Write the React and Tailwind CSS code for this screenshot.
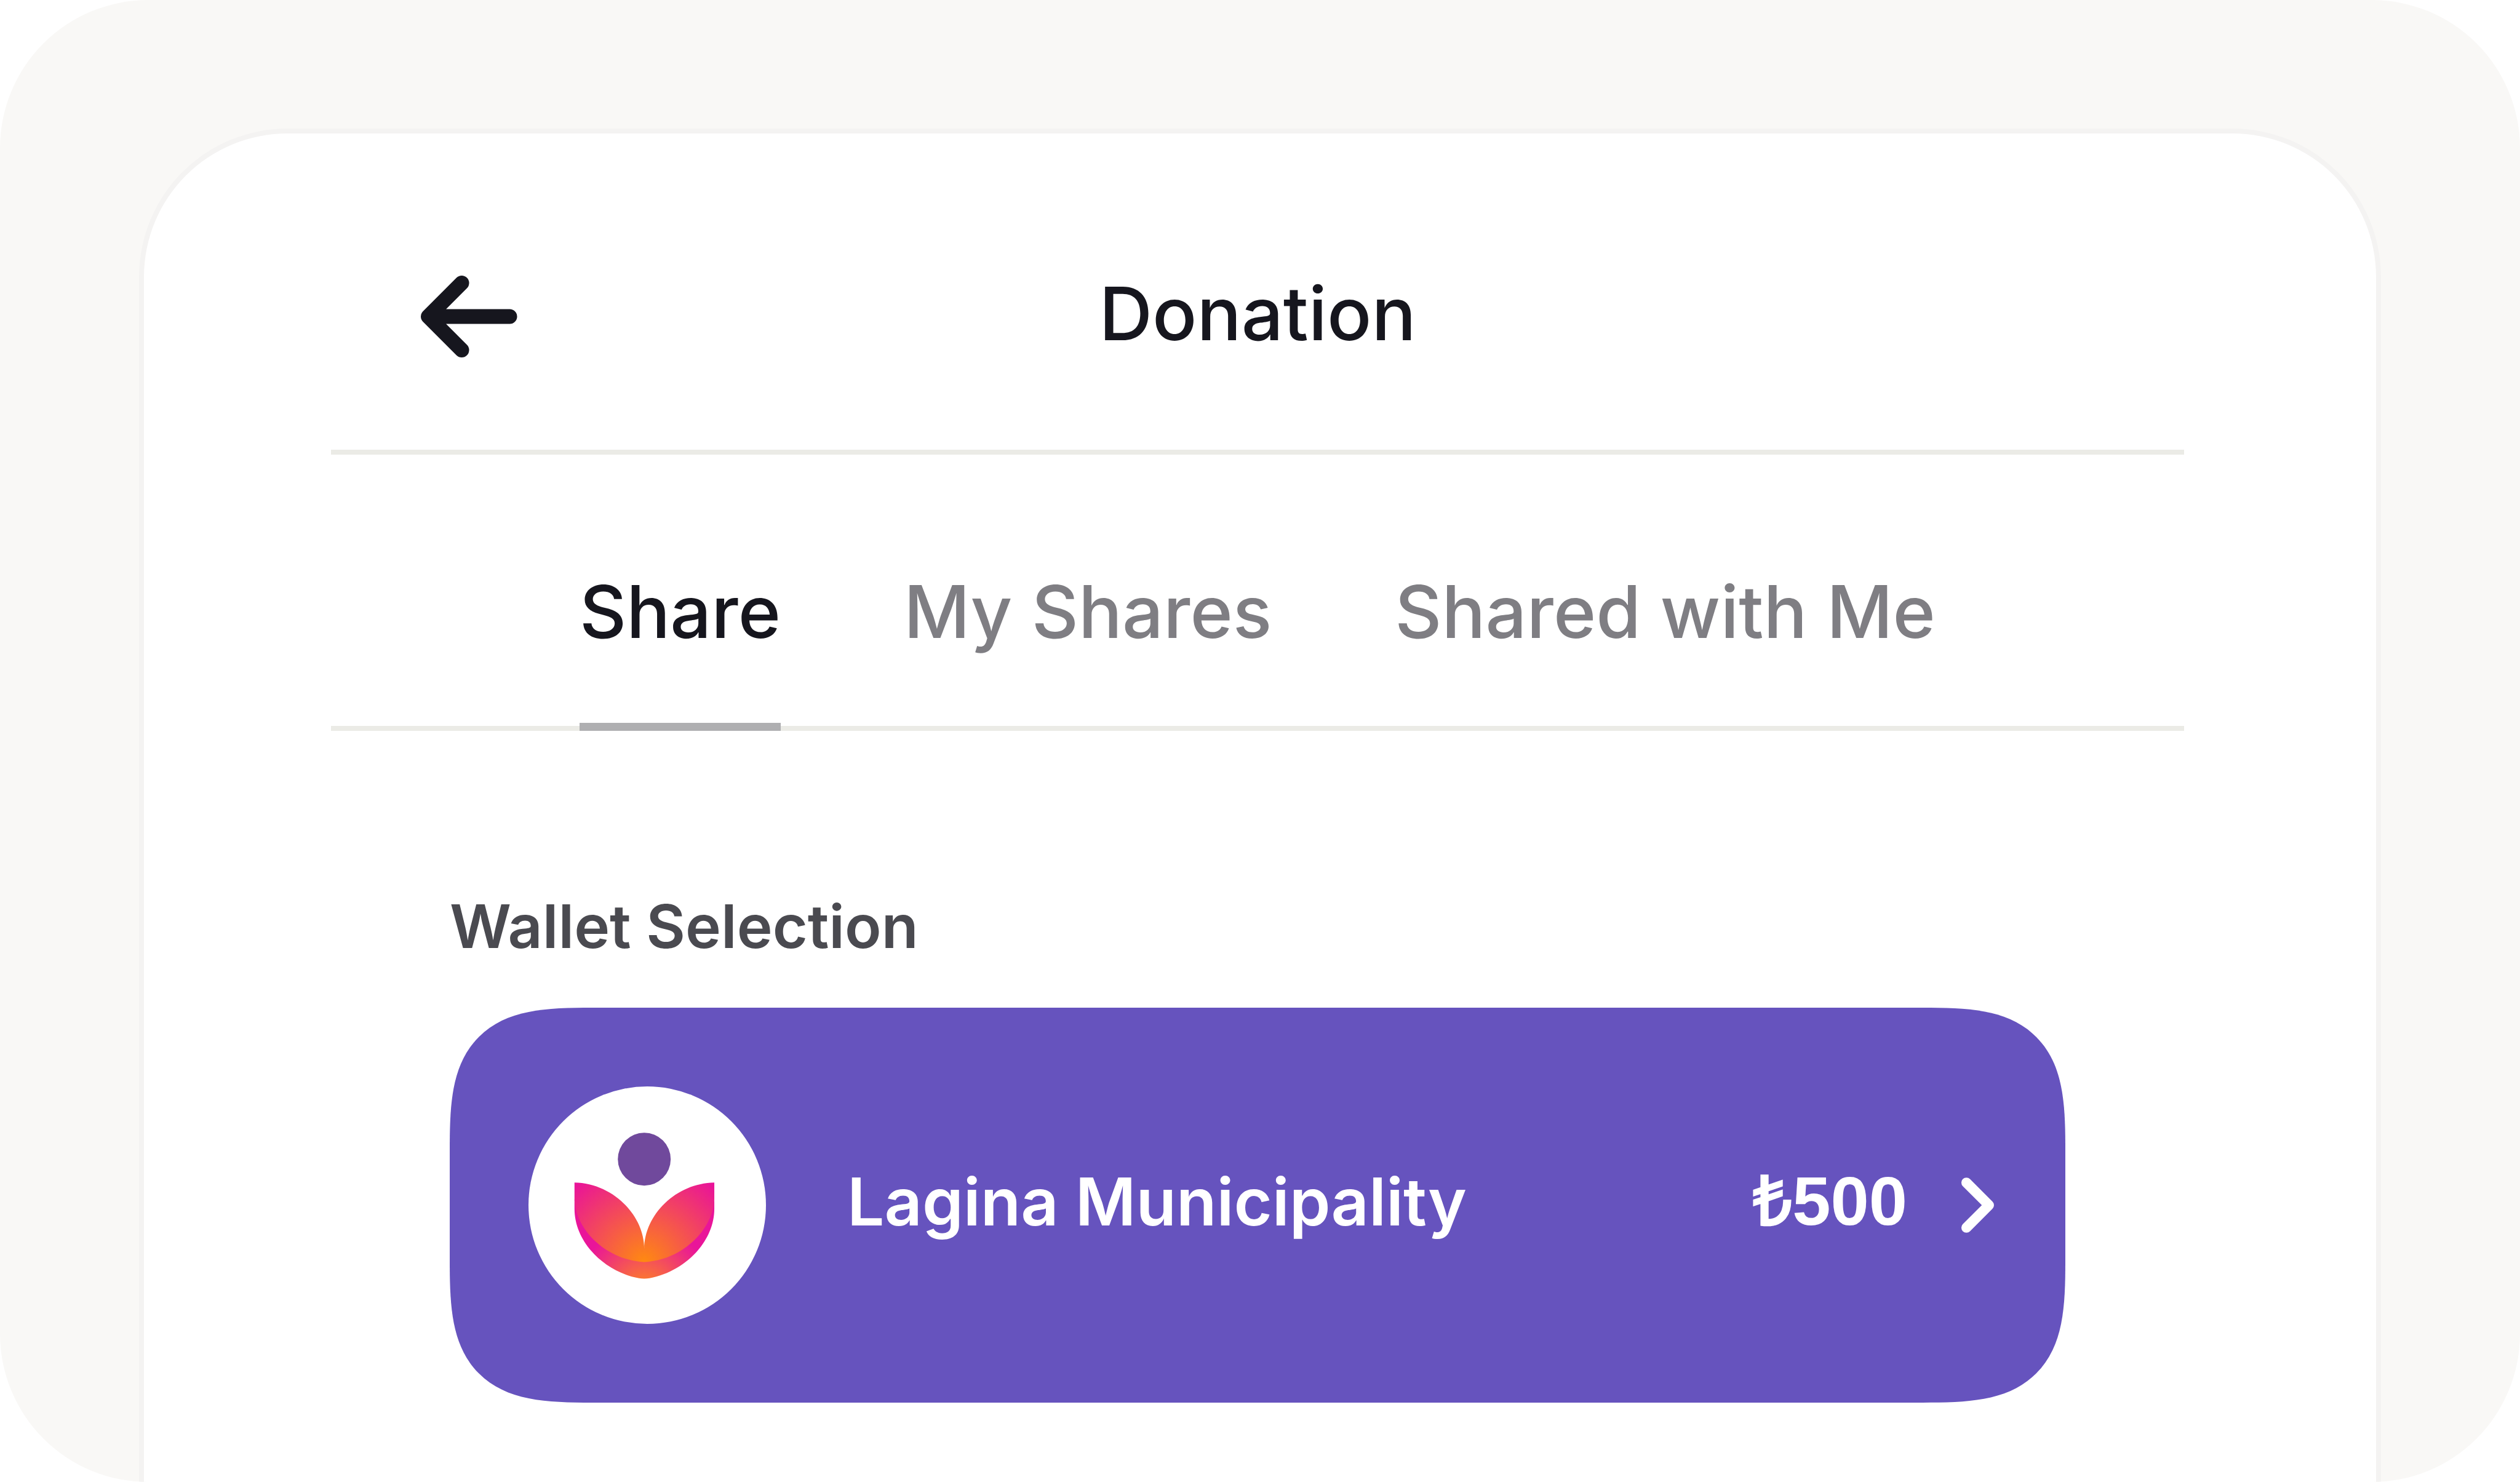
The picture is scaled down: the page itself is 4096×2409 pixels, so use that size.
import React, { useState } from 'react';

const tabs = ['Share', 'My Shares', 'Shared with Me'];

const LotusLogo = () => (
  <svg viewBox="0 0 400 400" className="w-full h-full" aria-hidden="true">
    <defs>
      <radialGradient id="petals" gradientUnits="userSpaceOnUse" cx="195" cy="296" r="174">
        <stop offset="0" stopColor="#ff8a10" />
        <stop offset="1" stopColor="#e91399" />
      </radialGradient>
      <radialGradient id="base" gradientUnits="userSpaceOnUse" cx="195" cy="345" r="112">
        <stop offset="0" stopColor="#ff8a1c" />
        <stop offset="1" stopColor="#e91599" />
      </radialGradient>
    </defs>
    <circle cx="195" cy="122.500" r="44.500" fill="#70499c" />
    <path
      d="M77.500 190V206C77.500 262 127 312 186 323Q195 324.500 204 323C263 312 313 262 313 206V190C305 235 255 278 195 285C135 278 85 235 77.500 190Z"
      fill="url(#base)"
    />
    <path
      d="M77.500 162C141 163 195 216 195 274C195 216 249 163 313 162V190C311 240 263 288 204 295Q195 296.500 186 295C127 288 79 240 77.500 190Z"
      fill="url(#petals)"
    />
  </svg>
);

const WalletCard = () => (
  <button
    type="button"
    className="flex w-full h-[642px] items-center bg-[#6653be] pl-32 pr-[116px] text-left text-white rounded-[232px] [corner-shape:superellipse(1.6)]"
  >
    <span className="size-[386px] shrink-0 rounded-full bg-white">
      <LotusLogo />
    </span>
    <span className="ml-[132px] pb-3 text-[107px] leading-[132px] font-semibold">Lagina Municipality</span>
    <span className="ml-auto pb-3 text-[112px] leading-[132px] font-bold font-['Liberation_Sans',sans-serif]">
      ₺500
    </span>
    <svg viewBox="0 0 55 93" className="ml-[88px] w-[53px] h-[90px] shrink-0" fill="none" aria-hidden="true">
      <path
        d="M8.500 8.500L46.500 46.500L8.500 84.500"
        stroke="currentColor"
        strokeWidth="17"
        strokeLinecap="round"
        strokeLinejoin="round"
      />
    </svg>
  </button>
);

const App = () => {
  const [active, setActive] = useState('Share');

  return (
    <div className="min-h-screen flex bg-[#f9f8f6] rounded-[241px] overflow-hidden px-[226px] pt-[209px] font-['Inter',sans-serif]">
      <main className="flex-1 bg-white border-8 border-b-0 border-[#f4f3f2] rounded-t-[241px] pl-[304px] pr-[312px]">
        <header className="grid grid-cols-3 items-center h-[522px] pt-20 border-b-8 border-[#ebebe6] px-[146px]">
          <button type="button" aria-label="Back" className="justify-self-start">
            <svg viewBox="0 0 163 138" className="w-[157px] h-[133px]" fill="none" aria-hidden="true">
              <path
                d="M69 12.500L12.500 69L69 125.500M12.500 69H150"
                stroke="#16161e"
                strokeWidth="25"
                strokeLinecap="round"
                strokeLinejoin="round"
              />
            </svg>
          </button>
          <h1 className="justify-self-center pb-2 text-[120px] leading-[140px] font-medium text-[#16161e]">Donation</h1>
        </header>

        <nav className="flex justify-center gap-[200px] border-b-8 border-[#ebebe6]">
          {tabs.map((tab) => (
            <button
              key={tab}
              type="button"
              onClick={() => setActive(tab)}
              className={
                tab === active
                  ? 'relative h-[441px] pt-[68px] text-[118px] leading-[140px] font-medium text-[#16161e]'
                  : 'relative h-[441px] pt-[68px] text-[118px] leading-[140px] font-medium text-[#7f7e83]'
              }
            >
              {tab}
              {tab === active && <span className="absolute inset-x-0 -bottom-2 h-[13px] bg-[#afafb1]" />}
            </button>
          ))}
        </nav>

        <section className="px-[193px] pt-[258px]">
          <h2 className="text-[98px] leading-[120px] font-semibold text-[#4a4a50] mb-[72px]">Wallet Selection</h2>
          <WalletCard />
        </section>
      </main>
    </div>
  );
};

export default App;
